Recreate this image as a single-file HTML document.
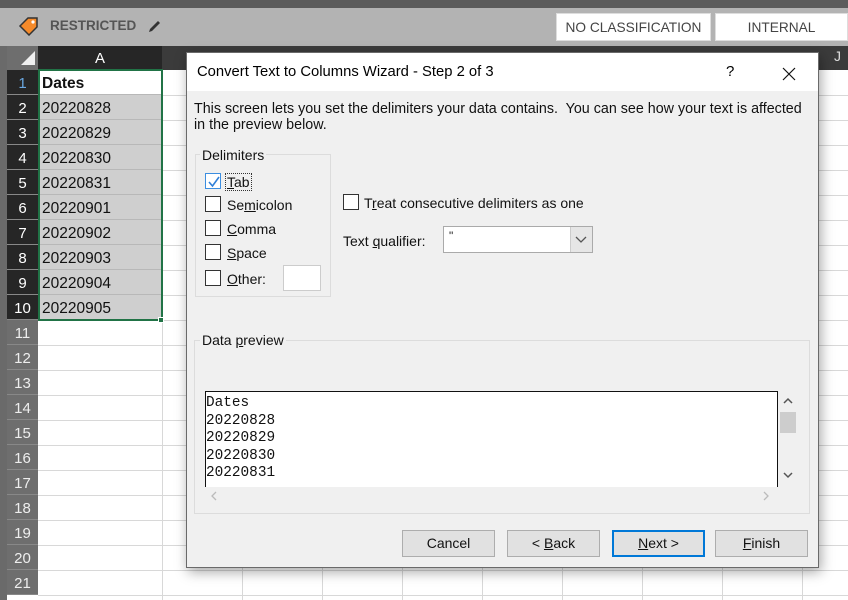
<!DOCTYPE html>
<html><head><meta charset="utf-8"><style>
*{margin:0;padding:0;box-sizing:border-box}
body{width:848px;height:600px;overflow:hidden;position:relative;background:#fff;font-family:"Liberation Sans",sans-serif}
.a{position:absolute}
.rh{position:absolute;left:7px;width:31px;height:25px;font-size:15px;text-align:center;line-height:27px;border-bottom:1px solid #888}
.cell{position:absolute;left:38px;width:124px;height:25px;background:#cfcfcf;border-bottom:1px solid #b8b8b8;font-size:15.5px;line-height:28px;padding-left:4px;color:#111}
.hl{position:absolute;left:38px;width:810px;height:1px;background:#d8d8d8}
.vl{position:absolute;top:70px;width:1px;height:530px;background:#d8d8d8}
.cb{position:absolute;width:16px;height:16px;border:1px solid #333;background:#fff}
.lb{position:absolute;font-size:14px;color:#111}
.btn{position:absolute;top:530px;width:93px;height:27px;background:#e1e1e1;border:1px solid #adadad;font-size:14px;text-align:center;line-height:25px;color:#111}
u{text-decoration:underline}
</style></head><body>
<div class="a" style="left:0;top:0;width:848px;height:8px;background:#5b5b5b"></div>
<div class="a" style="left:0;top:8px;width:848px;height:38px;background:#b3b3b3"></div>
<svg class="a" style="left:18px;top:16px" width="22" height="20" viewBox="0 0 22 20"><path d="M2 10 L10 2 L19 2 L19 11 L11 19 Z" fill="#f58a2a" stroke="#333" stroke-width="1.5"/><circle cx="15" cy="6" r="1.6" fill="#fff"/></svg>
<div class="a" style="left:50px;top:18px;font-size:13.5px;font-weight:bold;color:#555">RESTRICTED</div>
<svg class="a" style="left:147px;top:18px" width="16" height="16"><path d="M2 14 L3 11 L11 3 L13 5 L5 13 Z" fill="#333"/></svg>
<div class="a" style="left:556px;top:13px;width:155px;height:28px;background:#fff;border:1px solid #ddd;font-size:13.7px;color:#444;text-align:center;line-height:27px">NO CLASSIFICATION</div>
<div class="a" style="left:715px;top:13px;width:133px;height:28px;background:#fff;border:1px solid #ddd;font-size:13.7px;color:#444;text-align:center;line-height:27px">INTERNAL</div>
<div class="a" style="left:0;top:46px;width:7px;height:554px;background:#6a6a6a"></div>
<div class="a" style="left:7px;top:46px;width:841px;height:24px;background:#3b3b3b"></div>
<div class="a" style="left:7px;top:46px;width:31px;height:24px;background:#6e6e6e"></div>
<svg class="a" style="left:20px;top:50px" width="16" height="16"><path d="M15 1 L15 15 L1 15 Z" fill="#f0f0f0"/></svg>
<div class="a" style="left:38px;top:46px;width:124px;height:24px;background:#262626;color:#fff;font-size:15px;text-align:center;line-height:26px">A</div>
<div class="a" style="left:834px;top:48px;color:#ddd;font-size:14px">J</div>
<div class="hl" style="top:95px"></div>
<div class="vl" style="left:162px"></div><div class="vl" style="left:242px"></div><div class="vl" style="left:322px"></div><div class="vl" style="left:402px"></div><div class="vl" style="left:482px"></div><div class="vl" style="left:562px"></div><div class="vl" style="left:642px"></div><div class="vl" style="left:722px"></div><div class="vl" style="left:802px"></div>
<div class="hl" style="top:120px"></div><div class="hl" style="top:145px"></div><div class="hl" style="top:170px"></div><div class="hl" style="top:195px"></div><div class="hl" style="top:220px"></div><div class="hl" style="top:245px"></div><div class="hl" style="top:270px"></div><div class="hl" style="top:295px"></div><div class="hl" style="top:320px"></div><div class="hl" style="top:345px"></div><div class="hl" style="top:370px"></div><div class="hl" style="top:395px"></div><div class="hl" style="top:420px"></div><div class="hl" style="top:445px"></div><div class="hl" style="top:470px"></div><div class="hl" style="top:495px"></div><div class="hl" style="top:520px"></div><div class="hl" style="top:545px"></div><div class="hl" style="top:570px"></div><div class="hl" style="top:595px"></div>
<div class="rh" style="top:70px;background:#262626;color:#6aa7e0">1</div>
<div class="rh" style="top:95px;background:#262626;color:#fff">2</div>
<div class="rh" style="top:120px;background:#262626;color:#fff">3</div>
<div class="rh" style="top:145px;background:#262626;color:#fff">4</div>
<div class="rh" style="top:170px;background:#262626;color:#fff">5</div>
<div class="rh" style="top:195px;background:#262626;color:#fff">6</div>
<div class="rh" style="top:220px;background:#262626;color:#fff">7</div>
<div class="rh" style="top:245px;background:#262626;color:#fff">8</div>
<div class="rh" style="top:270px;background:#262626;color:#fff">9</div>
<div class="rh" style="top:295px;background:#262626;color:#fff">10</div>
<div class="rh" style="top:320px;background:#6e6e6e;color:#eee">11</div>
<div class="rh" style="top:345px;background:#6e6e6e;color:#eee">12</div>
<div class="rh" style="top:370px;background:#6e6e6e;color:#eee">13</div>
<div class="rh" style="top:395px;background:#6e6e6e;color:#eee">14</div>
<div class="rh" style="top:420px;background:#6e6e6e;color:#eee">15</div>
<div class="rh" style="top:445px;background:#6e6e6e;color:#eee">16</div>
<div class="rh" style="top:470px;background:#6e6e6e;color:#eee">17</div>
<div class="rh" style="top:495px;background:#6e6e6e;color:#eee">18</div>
<div class="rh" style="top:520px;background:#6e6e6e;color:#eee">19</div>
<div class="rh" style="top:545px;background:#6e6e6e;color:#eee">20</div>
<div class="rh" style="top:570px;background:#6e6e6e;color:#eee">21</div>
<div class="cell" style="top:70px;background:#fff;font-weight:bold">Dates</div>
<div class="cell" style="top:95px">20220828</div>
<div class="cell" style="top:120px">20220829</div>
<div class="cell" style="top:145px">20220830</div>
<div class="cell" style="top:170px">20220831</div>
<div class="cell" style="top:195px">20220901</div>
<div class="cell" style="top:220px">20220902</div>
<div class="cell" style="top:245px">20220903</div>
<div class="cell" style="top:270px">20220904</div>
<div class="cell" style="top:295px">20220905</div>
<div class="a" style="left:38px;top:69px;width:125px;height:252px;border:2px solid #217346"></div>
<div class="a" style="left:158px;top:317px;width:6px;height:6px;background:#217346;border:1px solid #fff"></div>

<div class="a" style="left:186px;top:52px;width:633px;height:516px;background:#f0f0f0;border:1px solid #6a6a6a;box-shadow:2px 4px 12px rgba(0,0,0,.35)">
<div class="a" style="left:0;top:0;width:631px;height:38px;background:#fff"></div>
<div class="a" style="left:10px;top:11px;font-size:14.8px;color:#000">Convert Text to Columns Wizard - Step 2 of 3</div>
<div class="a" style="left:539px;top:10px;font-size:15px;color:#000">?</div>
<svg class="a" style="left:595px;top:14px" width="14" height="14"><path d="M1 1L13 13M13 1L1 13" stroke="#111" stroke-width="1.2"/></svg>
<div class="a" style="left:7px;top:48px;font-size:14.3px;color:#111;line-height:16px;width:624px;white-space:nowrap">This screen lets you set the delimiters your data contains.&nbsp; You can see how your text is affected<br>in the preview below.</div>
<div class="a" style="left:8px;top:101px;width:136px;height:143px;border:1px solid #dcdcdc"></div>
<div class="lb" style="left:13px;top:94px;background:#f0f0f0;padding:0 2px">Delimiters</div>
<div class="cb" style="left:18px;top:120px;border-color:#3c8ee0"></div>
<svg class="a" style="left:19px;top:121px" width="16" height="16"><path d="M3 8 L6.5 12 L13 3" stroke="#2f7fd8" stroke-width="1.6" fill="none"/></svg>
<div class="lb" style="left:38px;top:120px;border:1px dotted #333;padding:0 1px"><u>T</u>ab</div>
<div class="cb" style="left:18px;top:143px"></div><div class="lb" style="left:40px;top:144px">Se<u>m</u>icolon</div>
<div class="cb" style="left:18px;top:167px"></div><div class="lb" style="left:40px;top:168px"><u>C</u>omma</div>
<div class="cb" style="left:18px;top:191px"></div><div class="lb" style="left:40px;top:192px"><u>S</u>pace</div>
<div class="cb" style="left:18px;top:217px"></div><div class="lb" style="left:40px;top:218px"><u>O</u>ther:</div>
<div class="a" style="left:96px;top:212px;width:38px;height:26px;background:#fff;border:1px solid #ccc"></div>
<div class="cb" style="left:156px;top:141px"></div><div class="lb" style="left:177px;top:142px">T<u>r</u>eat consecutive delimiters as one</div>
<div class="lb" style="left:156px;top:180px">Text <u>q</u>ualifier:</div>
<div class="a" style="left:256px;top:173px;width:150px;height:27px;background:#fff;border:1px solid #aaa"></div>
<div class="a" style="left:383px;top:174px;width:22px;height:25px;background:#e6e6e6;border-left:1px solid #ccc"></div>
<svg class="a" style="left:387px;top:182px" width="14" height="10"><path d="M2 2 L7 7 L12 2" stroke="#555" stroke-width="1.3" fill="none"/></svg>
<div class="a" style="left:262px;top:176px;font-size:12px;color:#222">"</div>
<div class="a" style="left:7px;top:287px;width:616px;height:174px;border:1px solid #dcdcdc"></div>
<div class="lb" style="left:13px;top:279px;background:#f0f0f0;padding:0 2px">Data <u>p</u>review</div>
<div class="a" style="left:18px;top:338px;width:573px;height:96px;background:#fff;border:1px solid #111;border-bottom:none"></div>
<div class="a" style="left:19px;top:342px;font-family:'Liberation Mono',monospace;font-size:14.4px;line-height:17.5px;color:#111">Dates<br>20220828<br>20220829<br>20220830<br>20220831</div>
<div class="a" style="left:593px;top:359px;width:16px;height:21px;background:#cdcdcd"></div>
<svg class="a" style="left:594px;top:343px" width="14" height="10"><path d="M3 7 L7 3 L11 7" stroke="#555" stroke-width="1.5" fill="none"/></svg>
<svg class="a" style="left:594px;top:417px" width="14" height="10"><path d="M3 3 L7 7 L11 3" stroke="#555" stroke-width="1.5" fill="none"/></svg>
<svg class="a" style="left:22px;top:436px" width="10" height="14"><path d="M7 3 L3 7 L7 11" stroke="#bbb" stroke-width="1.3" fill="none"/></svg>
<svg class="a" style="left:574px;top:436px" width="10" height="14"><path d="M3 3 L7 7 L3 11" stroke="#bbb" stroke-width="1.3" fill="none"/></svg>
</div>
<div class="btn" style="left:402px">Cancel</div>
<div class="btn" style="left:507px">&lt; <u>B</u>ack</div>
<div class="btn" style="left:612px;border:2px solid #0078d7;line-height:23px"><u>N</u>ext &gt;</div>
<div class="btn" style="left:715px"><u>F</u>inish</div>
</body></html>
